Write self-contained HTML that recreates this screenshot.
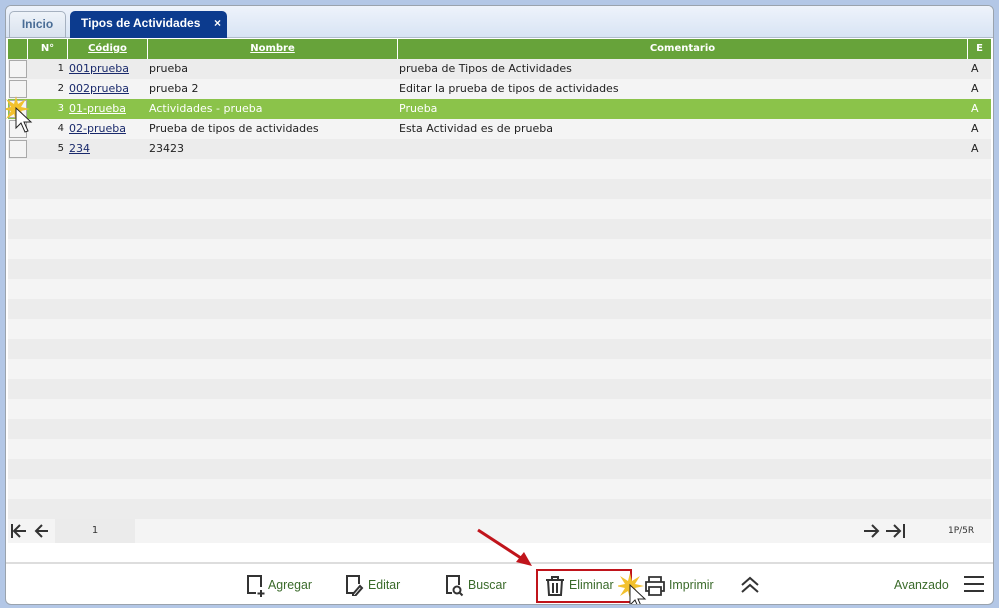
<!DOCTYPE html>
<html><head><style>
*{margin:0;padding:0;box-sizing:border-box}
body{width:999px;height:608px;background:#b3c7e6;font-family:"DejaVu Sans","Liberation Sans",sans-serif;position:relative;overflow:hidden}
.panel{position:absolute;left:5px;top:5px;width:989px;height:600px;background:#fff;border:1px solid #9aa3ad;border-radius:6px;overflow:hidden}
.strip{position:absolute;left:0;top:0;width:100%;height:32px;background:linear-gradient(#eef3fb,#d8e4f4);border-bottom:1px solid #b0bccb}
.tab{position:absolute;top:5px;height:27px;border-radius:5px 5px 0 0;font-size:12px;font-weight:bold;line-height:25px;font-family:"Liberation Sans",sans-serif}
.t1{left:3px;width:57px;background:linear-gradient(#eef3f9,#d9e2ee);border:1px solid #a6b1c0;color:#4a6d96;text-align:center}
.t2{left:64px;width:157px;background:#0c3b8e;color:#fff;padding-left:11px}
.t2 b{position:absolute;right:6px;top:0}
.abs{position:absolute}
.hdr{position:absolute;top:33px;left:2px;width:983px;height:20px;background:#67a33a;color:#fff;font-size:10px;font-weight:bold}
.hdr div{position:absolute;top:0;height:20px;line-height:19px;text-align:center;border-right:1px solid #fff}
.hdr u{text-decoration:underline}
.row{position:absolute;left:2px;width:983px;height:20px;font-size:11px;color:#222;line-height:20px}
.row span{position:absolute;top:0}
.cb{position:absolute;left:1px;top:1px;width:18px;height:18px;border:1px solid #a9a9a9;background:#f4f4f4}
.code{text-decoration:underline;color:#1a2a6c}
.sel{background:#8bc34a!important;color:#fff}
.sel .code{color:#fff}
.n{font-size:10px;width:34px;text-align:right}
.tb{position:absolute;top:571px;font-size:13px;color:#3a6a2a;font-family:"Liberation Sans",sans-serif;transform:scaleX(0.95);transform-origin:left}
</style></head><body>
<div class="panel">
<div class="strip">
<div class="tab t1">Inicio</div>
<div class="tab t2">Tipos de Actividades<b>×</b></div>
</div>
<div class="hdr">
<div style="left:0;width:20px"></div>
<div style="left:20px;width:40px">N°</div>
<div style="left:60px;width:80px"><u>Código</u></div>
<div style="left:140px;width:250px"><u>Nombre</u></div>
<div style="left:390px;width:570px">Comentario</div>
<div style="left:960px;width:23px;border:none">E</div>
</div>
<div id="rows"></div>
<div class="abs" style="left:2px;top:513px;width:983px;height:24px;background:#f4f4f4"></div>
<div class="abs" style="left:49px;top:513px;width:80px;height:24px;background:#ebebeb;font-size:10px;line-height:24px;text-align:center;color:#333">1</div>
<svg class="abs" style="left:4px;top:516px" width="44" height="18" viewBox="0 0 44 18" fill="none" stroke="#333" stroke-width="2"><path d="M2 2v14M16 9H4M10 3L4 9l6 6M38 9H26M32 3l-6 6 6 6"/></svg>
<svg class="abs" style="left:856px;top:516px" width="44" height="18" viewBox="0 0 44 18" fill="none" stroke="#333" stroke-width="2"><path d="M2 9h14M10 3l6 6-6 6M24 9h14M32 3l6 6-6 6M42 2v14"/></svg>
<div class="abs" style="left:942px;top:520px;font-size:9px;color:#333">1P/5R</div>
<div class="abs" style="left:0;top:556px;width:100%;height:2px;background:#ddd"></div>
<svg class="abs" style="left:240px;top:568px" width="20" height="24" viewBox="0 0 20 24" fill="none" stroke="#333" stroke-width="2"><path d="M10 19H2V2h13v11M15 16v7M11.5 19.5h7"/></svg>
<div class="tb" style="left:262px">Agregar</div>
<svg class="abs" style="left:339px;top:568px" width="20" height="22" viewBox="0 0 20 22" fill="none" stroke="#333" stroke-width="2"><path d="M9 19H2V2h12v8M8 20l7-8 2 2-7 8H8z"/></svg>
<div class="tb" style="left:362px">Editar</div>
<svg class="abs" style="left:439px;top:568px" width="20" height="24" viewBox="0 0 20 24" fill="none" stroke="#333" stroke-width="2"><path d="M7 19H2V2h12v9"/><circle cx="12" cy="16" r="3.5"/><path d="M14.5 18.5l3 3"/></svg>
<div class="tb" style="left:462px">Buscar</div>
<div class="abs" style="left:530px;top:563px;width:96px;height:34px;border:2px solid #c0141b"></div>
<svg class="abs" style="left:538px;top:569px" width="22" height="22" viewBox="0 0 22 22" fill="none" stroke="#333" stroke-width="2"><path d="M2 5h18M8 5V2h6v3M4 5l1 15h12l1-15M9 8v10M13 8v10"/></svg>
<div class="tb" style="left:563px">Eliminar</div>
<svg class="abs" style="left:638px;top:569px" width="22" height="22" viewBox="0 0 22 22" fill="none" stroke="#333" stroke-width="1.8"><path d="M5 7V2h12v5M5 16H2V7h18v9h-3M5 12h12v8H5z"/></svg>
<div class="tb" style="left:663px">Imprimir</div>
<svg class="abs" style="left:733px;top:570px" width="22" height="18" viewBox="0 0 22 18" fill="none" stroke="#333" stroke-width="2"><path d="M3 9l8-7 8 7M3 16l8-7 8 7"/></svg>
<div class="tb" style="left:888px">Avanzado</div>
<svg class="abs" style="left:957px;top:569px" width="22" height="18" viewBox="0 0 22 18" stroke="#333" stroke-width="2"><path d="M1 2h20M1 9h20M1 16h20"/></svg>
<svg class="abs" style="left:470px;top:522px" width="60" height="40" viewBox="0 0 60 40"><path d="M2 2L48 32" stroke="#c0141b" stroke-width="3"/><path d="M56 38L40 34l8-10z" fill="#c0141b"/></svg>
<svg class="abs" style="left:612px;top:565px" width="30" height="40" viewBox="0 0 30 40"><path d="M12 2l2 8 8-5-5 8 9 2-9 2 5 8-8-5-2 8-2-8-8 5 5-8-9-2 9-2-5-8 8 5z" fill="#f2c12e"/><path d="M12 14v20l5-5 4 9 3-1-4-9h7z" fill="#fff" stroke="#222"/></svg>
<svg class="abs" style="left:-2px;top:88px" width="30" height="40" viewBox="0 0 30 40"><path d="M12 2l2 8 8-5-5 8 9 2-9 2 5 8-8-5-2 8-2-8-8 5 5-8-9-2 9-2-5-8 8 5z" fill="#f2c12e"/><path d="M12 14v20l5-5 4 9 3-1-4-9h7z" fill="#fff" stroke="#222"/></svg>
</div>
<script>
var d=[["1","001prueba","prueba","prueba de Tipos de Actividades","A"],["2","002prueba","prueba 2","Editar la prueba de tipos de actividades","A"],["3","01-prueba","Actividades - prueba","Prueba","A"],["4","02-prueba","Prueba de tipos de actividades","Esta Actividad es de prueba","A"],["5","234","23423","","A"]];
var h="";
for(var i=0;i<23;i++){var t=53+i*20;var bg=i%2?"#f4f4f4":"#ececec";var r=d[i];
h+='<div class="row'+(i==2?' sel':'')+'" style="top:'+t+'px;background:'+bg+'">';
if(r){h+='<div class="cb"></div><span class="n" style="left:22px">'+r[0]+'</span><span class="code" style="left:61px">'+r[1]+'</span><span style="left:141px">'+r[2]+'</span><span style="left:391px">'+r[3]+'</span><span style="left:963px">'+r[4]+'</span>';}
h+='</div>';}
document.getElementById('rows').outerHTML=h;
</script>
</body></html>
